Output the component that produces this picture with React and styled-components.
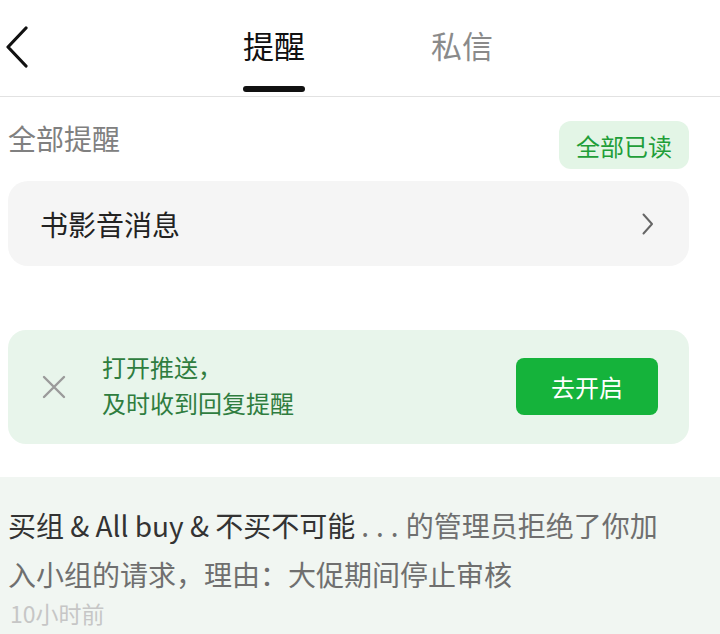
import React from "react";
import styled, { createGlobalStyle } from "styled-components";

const Global = createGlobalStyle`
  html, body { margin: 0; padding: 0; background: #fff; }
  body { font-family: "Noto Sans CJK SC", "Noto Sans", sans-serif; width: 720px; overflow: hidden; }
`;

const Page = styled.div`
  width: 720px;
  height: 634px;
  display: flex;
  flex-direction: column;
  overflow: hidden;
`;

const Header = styled.header`
  height: 96px;
  border-bottom: 1px solid #e2e2e2;
  display: grid;
  grid-template-columns: 60px 1fr 60px;
  align-items: stretch;
`;

const Back = styled.button`
  border: 0;
  background: none;
  padding: 26px 0 0 4px;
  display: flex;
  align-items: flex-start;
  cursor: pointer;
`;

const Tabs = styled.nav`
  display: flex;
  justify-content: center;
  gap: 126px;
  margin-left: 16px;
`;

const Tab = styled.div`
  display: flex;
  flex-direction: column;
  align-items: stretch;
  font-size: 31px;
  line-height: 1;
  padding-top: 29px;
  color: ${(p) => (p.$active ? "#111" : "#8a8a8a")};
  &::after {
    content: "";
    display: ${(p) => (p.$active ? "block" : "none")};
    margin-top: 26px;
    height: 6px;
    border-radius: 3px;
    background: #111;
  }
`;

const Body = styled.main`
  padding: 24px 31px 0 8px;
  display: flex;
  flex-direction: column;
`;

const SectionHead = styled.div`
  display: flex;
  justify-content: space-between;
  align-items: flex-start;
`;

const SectionTitle = styled.div`
  font-size: 28px;
  line-height: 32px;
  color: #808080;
  margin-top: 1px;
`;

const ReadAll = styled.button`
  border: 0;
  background: #e3f5e6;
  color: #1f9e38;
  font-family: inherit;
  font-size: 24px;
  height: 48px;
  padding: 0 17px;
  border-radius: 12px;
`;

const Card = styled.div`
  margin-top: 12px;
  height: 85px;
  background: #f5f5f5;
  border-radius: 20px;
  display: flex;
  align-items: center;
  justify-content: space-between;
  padding: 0 34px 0 32px;
  font-size: 28px;
  color: #222;
`;

const Banner = styled.div`
  margin-top: 64px;
  height: 114px;
  background: #e8f5eb;
  border-radius: 18px;
  display: flex;
  align-items: center;
  padding: 0 31px 0 34px;
`;

const Close = styled.div`
  width: 24px;
  height: 24px;
  display: flex;
  margin-right: 36px;
`;

const BannerText = styled.div`
  flex: 1;
  font-size: 24px;
  line-height: 36px;
  color: #2f7d3f;
  margin-top: -4px;
`;

const OpenBtn = styled.button`
  border: 0;
  background: #15b33b;
  color: #fff;
  font-family: inherit;
  font-size: 24px;
  width: 142px;
  height: 57px;
  border-radius: 8px;
  margin-top: -2px;
`;

const Notice = styled.section`
  margin-top: 33px;
  flex: 1;
  background: #f1f6f2;
  padding: 24px 40px 0 8px;
`;

const NoticeText = styled.p`
  margin: 0;
  font-size: 28px;
  line-height: 49px;
`;

const Part = styled.span`
  color: ${(p) => (p.$strong ? "#333" : "#6f6f6f")};
  letter-spacing: ${(p) => (p.$dots ? "7px" : "normal")};
  padding-left: ${(p) => (p.$dots ? "6px" : "0")};
`;

const Time = styled.div`
  font-size: 23px;
  line-height: 28px;
  color: #c6c6c6;
  padding-left: 2px;
`;

export default function App() {
  return (
    <Page>
      <Global />
      <Header>
        <Back aria-label="返回">
          <svg width="26" height="42" viewBox="0 0 26 42">
            <path d="M22 2 L4 21 L22 40" fill="none" stroke="#111" strokeWidth="3.2" strokeLinecap="round" strokeLinejoin="round" />
          </svg>
        </Back>
        <Tabs>
          <Tab $active>提醒</Tab>
          <Tab>私信</Tab>
        </Tabs>
        <div />
      </Header>
      <Body>
        <SectionHead>
          <SectionTitle>全部提醒</SectionTitle>
          <ReadAll>全部已读</ReadAll>
        </SectionHead>
        <Card>
          <span>书影音消息</span>
          <svg width="14" height="24" viewBox="0 0 14 24">
            <path d="M2.5 2.5 L11 12 L2.5 21.5" fill="none" stroke="#666" strokeWidth="2" strokeLinecap="round" strokeLinejoin="round" />
          </svg>
        </Card>
        <Banner>
          <Close>
            <svg width="24" height="24" viewBox="0 0 24 24">
              <path d="M2 2 L22 22 M22 2 L2 22" stroke="#9a9a9a" strokeWidth="2.4" strokeLinecap="round" />
            </svg>
          </Close>
          <BannerText>
            打开推送，
            <br />
            及时收到回复提醒
          </BannerText>
          <OpenBtn>去开启</OpenBtn>
        </Banner>
      </Body>
      <Notice>
        <NoticeText>
          <Part $strong>买组 &amp; All buy &amp; 不买不可能</Part>
          <Part $dots>...</Part>
          <Part>的管理员拒绝了你加入小组的请求，理由：大促期间停止审核</Part>
        </NoticeText>
        <Time>10小时前</Time>
      </Notice>
    </Page>
  );
}
